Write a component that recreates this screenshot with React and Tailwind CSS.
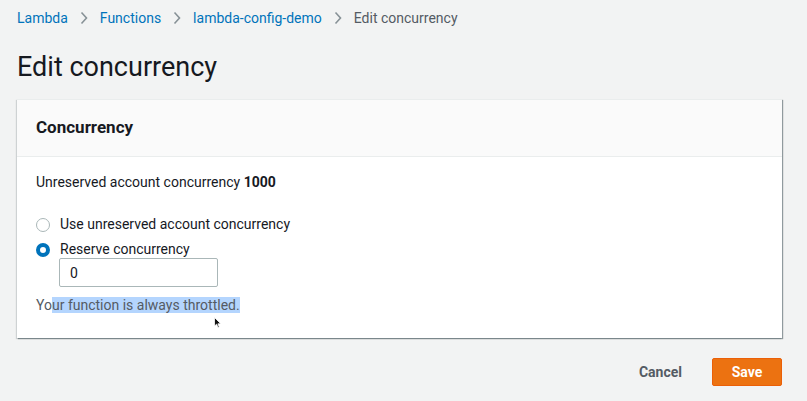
import React, { useState } from 'react'

function Chevron() {
  return (
    <svg width="10" height="14" viewBox="0 0 10 14" className="mx-[11px]">
      <path d="M2.5 1.5 L7.5 7 L2.5 12.5" fill="none" stroke="#879196" strokeWidth="1.6" />
    </svg>
  )
}

function Radio({ checked, label, onClick }) {
  return (
    <label className="flex items-center gap-[10px] cursor-pointer" onClick={onClick}>
      {checked ? (
        <span className="w-[14px] h-[14px] rounded-full border-[4px] border-[#0073bb] bg-white" />
      ) : (
        <span className="w-[14px] h-[14px] rounded-full border border-[#aab7b8] bg-white" />
      )}
      <span className="text-[14px] text-[#16191f]">{label}</span>
    </label>
  )
}

export default function App() {
  const [mode, setMode] = useState("reserve")
  const [value, setValue] = useState("0")

  return (
    <div className="w-[807px] h-[401px] bg-[#f2f3f3] overflow-hidden" style={{ fontFamily: 'Roboto, "Noto Sans", Arial, sans-serif' }}>
      <div className="px-[17px] pt-[8px]">
        <nav className="flex items-center h-[20px] text-[14px]">
          <a className="text-[#0073bb]">Lambda</a>
          <Chevron />
          <a className="text-[#0073bb]">Functions</a>
          <Chevron />
          <a className="text-[#0073bb]">lambda-config-demo</a>
          <Chevron />
          <span className="text-[#545b64]">Edit concurrency</span>
        </nav>

        <h1 className="mt-[22px] text-[27px] leading-[34px] text-[#16191f]">Edit concurrency</h1>

        <div className="mt-[15px] w-[765px] bg-white border-t border-[#eaeded] shadow-[1px_1px_1px_0_rgba(0,28,36,0.3),1px_1px_1px_0_rgba(0,28,36,0.15),-1px_1px_1px_0_rgba(0,28,36,0.15)]">
          <div className="h-[57px] bg-[#fafafa] border-b border-[#eaeded] flex items-center px-[19px]">
            <h2 className="text-[17px] font-bold text-[#16191f]">Concurrency</h2>
          </div>
          <div className="px-[19px] pt-[15px] pb-[23px]">
            <p className="text-[14px] text-[#16191f] leading-[20px]">
              Unreserved account concurrency <b>1000</b>
            </p>
            <div className="mt-[22px] flex flex-col gap-[4px]">
              <Radio checked={mode === "unreserved"} label="Use unreserved account concurrency" onClick={() => setMode("unreserved")} />
              <Radio checked={mode === "reserve"} label="Reserve concurrency" onClick={() => setMode("reserve")} />
            </div>
            <input
              value={value}
              onChange={(e) => setValue(e.target.value)}
              className="ml-[23px] -mt-[2px] w-[159px] h-[29px] border border-[#aab7b8] rounded-[2px] px-[10px] text-[14px] text-[#16191f] outline-none"
            />
            <p className="mt-[8px] text-[14px] leading-[20px] text-[#545b64] relative">
              Yo<span className="bg-[#b4d5fe]">ur function is always throttled.</span>
              <svg className="absolute left-[178px] top-[22px]" width="8" height="12" viewBox="0 0 8 12">
                <path d="M0.5 0.5 L0.5 9 L2.6 7.2 L4 10.5 L5.3 10 L3.9 6.8 L6.8 6.8 Z" fill="#111" stroke="#fff" strokeWidth="0.8" />
              </svg>
            </p>
          </div>
        </div>

        <div className="w-[765px] mt-[20px] flex justify-end items-center gap-[30px]">
          <button className="text-[14px] font-bold text-[#545b64]">Cancel</button>
          <button className="w-[70px] h-[28px] bg-[#ec7211] border border-[#eb5f07] rounded-[2px] text-[14px] font-bold text-white">Save</button>
        </div>
      </div>
    </div>
  )
}
